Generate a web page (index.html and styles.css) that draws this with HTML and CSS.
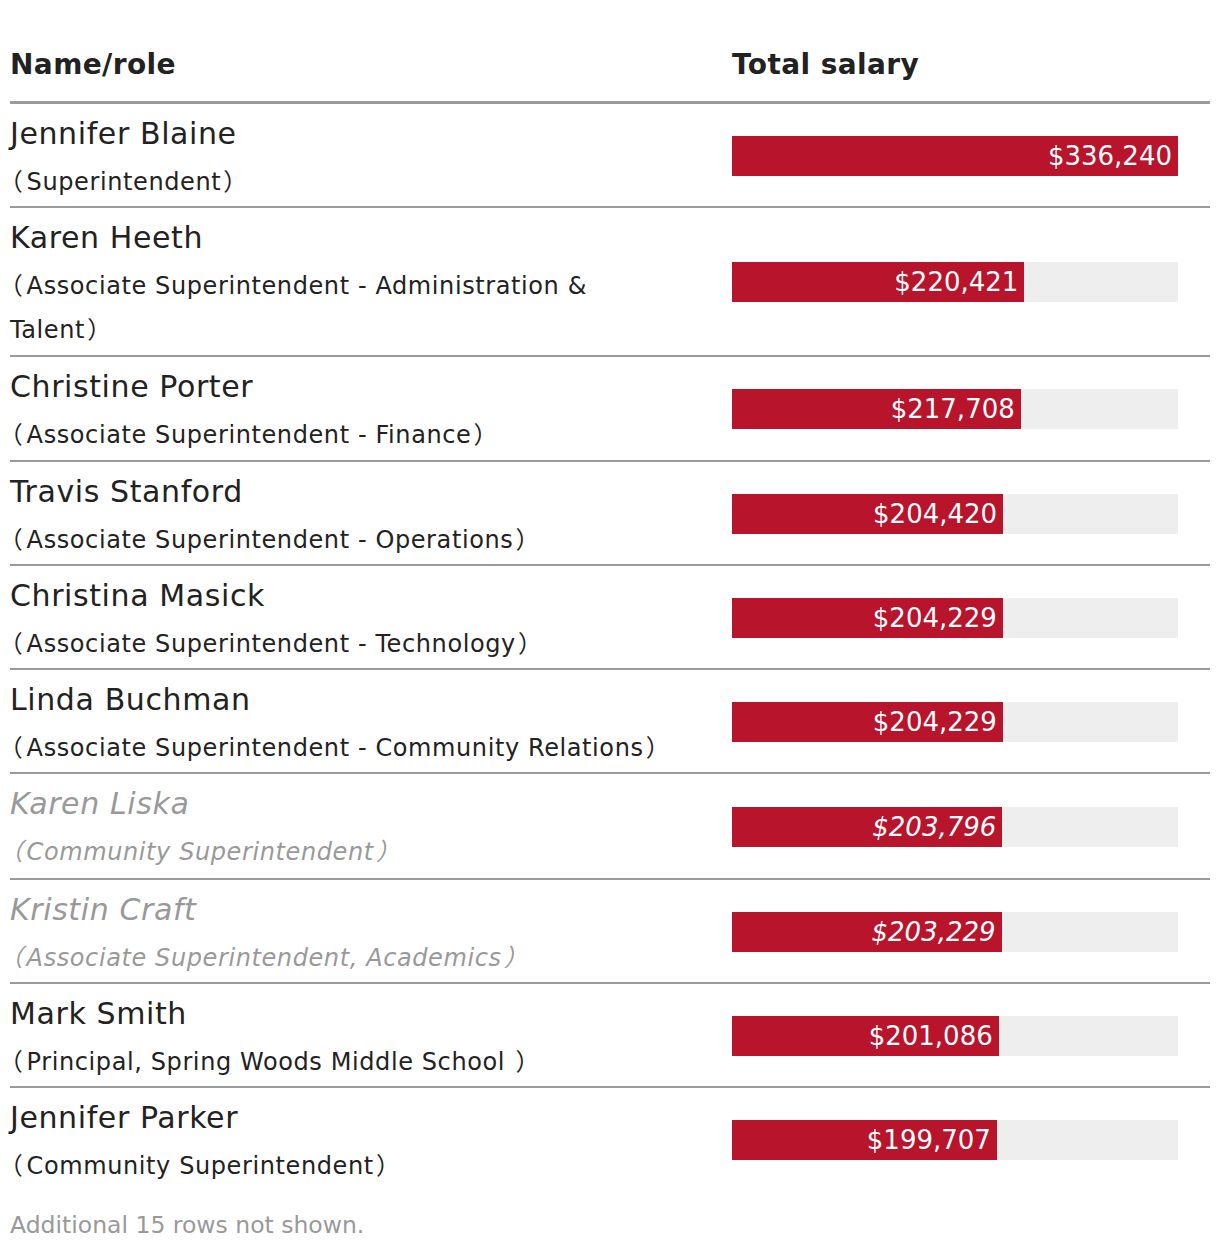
FILE: index.html
```html
<!DOCTYPE html>
<html lang="en">
<head>
<meta charset="utf-8">
<title>Total salary</title>
<link rel="stylesheet" href="styles.css">
</head>
<body>
<div class="chart">
  <div class="table">
    <div class="row head">
      <div class="c-name">Name/role</div>
      <div class="c-sal">Total salary</div>
    </div>

    <div class="row">
      <div class="c-name"><div class="name">Jennifer Blaine</div><div class="role"><span class="lp">（</span>Superintendent<span class="rp">）</span></div></div>
      <div class="c-sal"><div class="track"><div class="bar" style="width:100%"><span>$336,240</span></div></div></div>
    </div>

    <div class="row plus1">
      <div class="c-name"><div class="name">Karen Heeth</div><div class="role"><span class="lp">（</span>Associate Superintendent - Administration &amp; Talent<span class="rp">）</span></div></div>
      <div class="c-sal"><div class="track"><div class="bar" style="width:65.555%"><span>$220,421</span></div></div></div>
    </div>

    <div class="row plus1">
      <div class="c-name"><div class="name">Christine Porter</div><div class="role"><span class="lp">（</span>Associate Superintendent - Finance<span class="rp">）</span></div></div>
      <div class="c-sal"><div class="track"><div class="bar" style="width:64.748%"><span>$217,708</span></div></div></div>
    </div>

    <div class="row">
      <div class="c-name"><div class="name">Travis Stanford</div><div class="role"><span class="lp">（</span>Associate Superintendent - Operations<span class="rp">）</span></div></div>
      <div class="c-sal"><div class="track"><div class="bar" style="width:60.795%"><span>$204,420</span></div></div></div>
    </div>

    <div class="row">
      <div class="c-name"><div class="name">Christina Masick</div><div class="role"><span class="lp">（</span>Associate Superintendent - Technology<span class="rp">）</span></div></div>
      <div class="c-sal"><div class="track"><div class="bar" style="width:60.739%"><span>$204,229</span></div></div></div>
    </div>

    <div class="row">
      <div class="c-name"><div class="name">Linda Buchman</div><div class="role"><span class="lp">（</span>Associate Superintendent - Community Relations<span class="rp">）</span></div></div>
      <div class="c-sal"><div class="track"><div class="bar" style="width:60.739%"><span>$204,229</span></div></div></div>
    </div>

    <div class="row muted tall">
      <div class="c-name"><div class="name">Karen Liska</div><div class="role"><span class="lp">（</span>Community Superintendent<span class="rp">）</span></div></div>
      <div class="c-sal"><div class="track"><div class="bar" style="width:60.610%"><span>$203,796</span></div></div></div>
    </div>

    <div class="row muted">
      <div class="c-name"><div class="name">Kristin Craft</div><div class="role"><span class="lp">（</span>Associate Superintendent, Academics<span class="rp">）</span></div></div>
      <div class="c-sal"><div class="track"><div class="bar" style="width:60.441%"><span>$203,229</span></div></div></div>
    </div>

    <div class="row">
      <div class="c-name"><div class="name">Mark Smith</div><div class="role"><span class="lp">（</span>Principal, Spring Woods Middle School <span class="rp">）</span></div></div>
      <div class="c-sal"><div class="track"><div class="bar" style="width:59.804%"><span>$201,086</span></div></div></div>
    </div>

    <div class="row last">
      <div class="c-name"><div class="name">Jennifer Parker</div><div class="role"><span class="lp">（</span>Community Superintendent<span class="rp">）</span></div></div>
      <div class="c-sal"><div class="track"><div class="bar" style="width:59.394%"><span>$199,707</span></div></div></div>
    </div>
  </div>
  <p class="note">Additional 15 rows not shown.</p>
</div>
</body>
</html>
```

FILE: styles.css
```css
html, body {
  margin: 0;
  padding: 0;
  background: #ffffff;
}

body {
  font-family: "DejaVu Sans", "Noto Sans CJK JP", sans-serif;
  color: #222222;
  font-feature-settings: "palt";
}

.chart {
  padding: 0 10px;
}

.row {
  display: grid;
  grid-template-columns: 722px 1fr;
  border-bottom: 2px solid #9b9b9b;
}

.row.last {
  border-bottom: none;
}

.head {
  border-bottom: 3px solid #9b9b9b;
  font-weight: 700;
  font-size: 28px;
  line-height: 34px;
  letter-spacing: 0.4px;
  padding-top: 48px;
  padding-bottom: 19px;
  color: #222222;
}

.c-name {
  padding: 4px 57px 2px 0;
}

.head .c-name {
  padding: 0;
}

.plus1 .c-name {
  padding-bottom: 3px;
}

.tall .c-name {
  padding-bottom: 4px;
}

.name {
  font-size: 30px;
  line-height: 52px;
  letter-spacing: 0.6px;
}

.role {
  font-size: 24px;
  line-height: 44px;
  letter-spacing: 0.6px;
}

.lp {
  margin-right: 4px;
}

.rp {
  margin-left: 3px;
}

.c-sal {
  display: flex;
  align-items: center;
  padding-top: 1px;
}

.head .c-sal {
  padding-top: 0;
}

.track {
  width: calc(100% - 32px);
  height: 40px;
  background: #eeeeee;
  display: flex;
}

.bar {
  background: #b8142c;
  height: 40px;
  display: flex;
  align-items: center;
  justify-content: flex-end;
  padding-right: 6px;
  box-sizing: border-box;
  color: #ffffff;
  font-size: 26px;
}

.muted {
  color: #999999;
  font-style: italic;
}

.note {
  margin: 20px 0 0;
  font-size: 23.5px;
  line-height: 30px;
  color: #999999;
}
```
